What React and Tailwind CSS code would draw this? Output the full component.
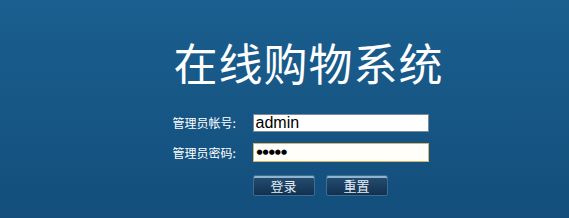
export default function App() {
  return (
    <div className="w-[569px] h-[218px] bg-gradient-to-b from-[#1a5f8f] to-[#134e7c] flex flex-col items-center">
      <div className="mt-[36px] ml-[48px] text-white text-[44px] leading-[52px] tracking-[1px]" style={{ fontFamily: '"Noto Sans CJK SC", sans-serif' }}>
        在线购物系统
      </div>
      <div className="mt-[26px] ml-[32px] flex flex-col gap-[11px]" style={{ fontFamily: '"Noto Sans CJK SC", sans-serif' }}>
        <div className="flex items-center">
          <span className="w-[80px] text-white text-[12px] leading-[14px]">管理员帐号:</span>
          <div className="w-[176px] h-[18px] bg-white border border-[#7a8a99] flex items-center pl-[2px] text-[16px] text-black" style={{ fontFamily: '"Liberation Sans", Arial, sans-serif' }}>admin</div>
        </div>
        <div className="flex items-center">
          <span className="w-[80px] text-white text-[12px] leading-[14px]">管理员密码:</span>
          <div className="w-[176px] h-[19px] bg-[#fffef8] border border-[#d9b56a] flex items-center pl-[3px] text-[7px] text-black tracking-[0px]" style={{ fontFamily: '"DejaVu Sans", sans-serif' }}>●●●●●</div>
        </div>
        <div className="flex gap-[11px] ml-[80px] mt-[2px]">
          <button className="w-[62px] h-[21px] rounded-[2px] border border-[#3f6d92] bg-gradient-to-b from-[#264f74] to-[#12314f] shadow-[inset_0_2px_0_#8fb4d0] text-[#e4eef6] text-[13px] leading-[19px]">登录</button>
          <button className="w-[62px] h-[21px] rounded-[2px] border border-[#3f6d92] bg-gradient-to-b from-[#264f74] to-[#12314f] shadow-[inset_0_2px_0_#8fb4d0] text-[#e4eef6] text-[13px] leading-[19px]">重置</button>
        </div>
      </div>
    </div>
  );
}
